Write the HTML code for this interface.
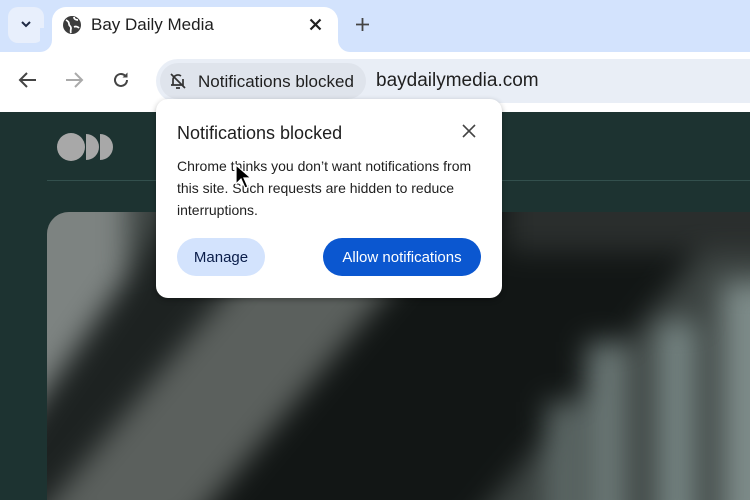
<!DOCTYPE html>
<html><head><style>
*{margin:0;padding:0;box-sizing:border-box}
html,body{width:750px;height:500px;overflow:hidden}
body{position:relative;font-family:"Liberation Sans",sans-serif;background:#1d3331}
.abs{position:absolute}
.btn{display:flex;align-items:center;justify-content:center;font-size:15px}
</style></head><body>
<!-- tab strip -->
<div class="abs" style="left:0;top:0;width:750px;height:52px;background:#d3e3fd"></div>
<div class="abs" style="left:8px;top:7px;width:36px;height:36px;border-radius:10px;background:#e8effc"></div>
<svg class="abs" style="left:19px;top:19px" width="14" height="12" viewBox="0 0 14 12"><path d="M3 3l4 4 4-4" stroke="#1f2a44" stroke-width="2" fill="none"/></svg>
<div class="abs" style="left:40px;top:40px;width:12px;height:12px;background:#fff"></div>
<div class="abs" style="left:40px;top:28px;width:12px;height:24px;background:#d3e3fd;border-bottom-right-radius:12px"></div>
<div class="abs" style="left:52px;top:7px;width:286px;height:50px;background:#fff;border-radius:14px 14px 0 0"></div>
<div class="abs" style="left:338px;top:40px;width:12px;height:12px;background:#fff"></div>
<div class="abs" style="left:338px;top:28px;width:12px;height:24px;background:#d3e3fd;border-bottom-left-radius:12px"></div>
<svg class="abs" style="left:62px;top:15px" width="20" height="20" viewBox="0 0 20 20"><circle cx="10" cy="10" r="9" fill="#3c3c3c"/><path d="M4 5c2 1 3 2 3 4s2 2 2 4-1 3 0 5M12 2c0 2 2 3 4 3M12 12c2-1 4 0 5 1" stroke="#fff" stroke-width="1.8" fill="none"/></svg>
<div class="abs" style="left:91px;top:15px;font-size:17px;color:#1f1f1f">Bay Daily Media</div>
<svg class="abs" style="left:309px;top:18px" width="13" height="13" viewBox="0 0 13 13"><path d="M1.5 1.5l10 10M11.5 1.5l-10 10" stroke="#1f1f1f" stroke-width="2.2"/></svg>
<svg class="abs" style="left:355px;top:17px" width="15" height="15" viewBox="0 0 15 15"><path d="M7.5 1v13M1 7.5h13" stroke="#444" stroke-width="1.8"/></svg>
<!-- toolbar -->
<div class="abs" style="left:0;top:52px;width:750px;height:60px;background:#fff"></div>
<svg class="abs" style="left:18px;top:71px" width="20" height="18" viewBox="0 0 20 18"><path d="M18 9H3M9 2L2 9l7 7" stroke="#444" stroke-width="2" fill="none"/></svg>
<svg class="abs" style="left:64px;top:71px" width="20" height="18" viewBox="0 0 20 18"><path d="M2 9h15M11 2l7 7-7 7" stroke="#aaa" stroke-width="2" fill="none"/></svg>
<svg class="abs" style="left:111px;top:70px" width="20" height="20" viewBox="0 0 20 20"><path d="M16 10a6 6 0 1 1-2-4.5" stroke="#444" stroke-width="2" fill="none"/><path d="M16.5 2.5v5h-5z" fill="#444"/></svg>
<div class="abs" style="left:156px;top:59px;width:594px;height:44px;border-radius:22px 0 0 22px;background:#e9eef6"></div>
<div class="abs" style="left:160px;top:63px;width:206px;height:36px;border-radius:18px;background:#dfe4ec"></div>
<svg class="abs" style="left:168px;top:71px" width="20" height="20" viewBox="0 0 20 20"><path d="M5 14V9a5 5 0 0 1 8-4M15 8v6H6M3 14h12M8 17h4M3 3l14 14" stroke="#333" stroke-width="1.7" fill="none"/></svg>
<div class="abs" style="left:198px;top:72px;font-size:17px;color:#1f1f1f">Notifications blocked</div>
<div class="abs" style="left:376px;top:70px;font-size:19px;color:#1f1f1f">baydailymedia.com</div>
<!-- page -->
<svg class="abs" style="left:57px;top:133px" width="60" height="28" viewBox="0 0 60 28"><circle cx="14" cy="14" r="14" fill="#a8a8a8"/><path d="M29 1A13 13 0 0 1 29 27Z" fill="#a8a8a8"/><path d="M43 1A13 13 0 0 1 43 27Z" fill="#a8a8a8"/></svg>
<div class="abs" style="left:47px;top:180px;width:703px;height:1px;background:#33504d"></div>
<div class="abs" style="left:47px;top:212px;width:703px;height:288px;border-top-left-radius:22px;overflow:hidden;background:#3d4442">
 <div class="abs" style="left:-40px;top:-40px;width:780px;height:360px;filter:blur(14px)">
  <div class="abs" style="left:0;top:0;width:120px;height:360px;background:#7d8381"></div>
  <div class="abs" style="left:60px;top:20px;width:300px;height:340px;background:#1d2221;transform:skewX(-35deg)"></div>
  <div class="abs" style="left:170px;top:0;width:200px;height:360px;background:#5b605d;transform:skewX(-40deg)"></div>
  <div class="abs" style="left:330px;top:0;width:280px;height:360px;background:#121615;transform:skewX(-40deg)"></div>
  <div class="abs" style="left:500px;top:0;width:280px;height:80px;background:#2a2e2d"></div>
  <div class="abs" style="left:580px;top:170px;width:40px;height:190px;background:#6b7876"></div>
  <div class="abs" style="left:650px;top:150px;width:40px;height:210px;background:#758482"></div>
  <div class="abs" style="left:715px;top:110px;width:60px;height:250px;background:#7d8b89"></div>
  <div class="abs" style="left:540px;top:230px;width:30px;height:130px;background:#5f6b69"></div>
 </div>
</div>
<!-- popup -->
<div class="abs" style="left:156px;top:99px;width:346px;height:199px;background:#fff;border-radius:12px;box-shadow:0 2px 6px rgba(0,0,0,.3)"></div>
<div class="abs" style="left:177px;top:123px;font-size:18px;color:#1f1f1f">Notifications blocked</div>
<svg class="abs" style="left:462px;top:124px" width="14" height="14" viewBox="0 0 14 14"><path d="M1 1l12 12M13 1L1 13" stroke="#444" stroke-width="1.6"/></svg>
<div class="abs" style="left:177px;top:155px;width:300px;font-size:14px;line-height:22px;color:#1f1f1f">Chrome thinks you don’t want notifications from this site. Such requests are hidden to reduce interruptions.</div>
<div class="abs btn" style="left:177px;top:238px;width:88px;height:38px;border-radius:19px;background:#d3e3fd;color:#0a1d4a">Manage</div>
<div class="abs btn" style="left:323px;top:238px;width:158px;height:38px;border-radius:19px;background:#0b57d0;color:#fff">Allow notifications</div>
<svg class="abs" style="left:235px;top:164px" width="16" height="26" viewBox="0 0 16 26"><path d="M1 1v19l5-5 4 9 3-1-4-9h7z" fill="#000" stroke="#fff" stroke-width="1.2"/></svg>
</body></html>
